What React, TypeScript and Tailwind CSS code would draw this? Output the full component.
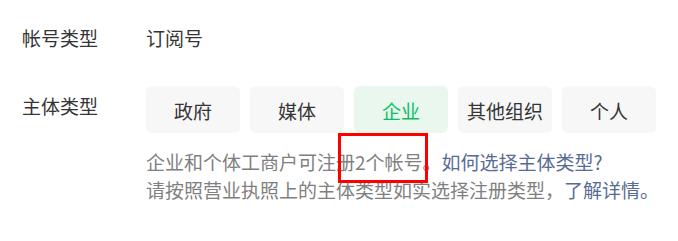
import React from 'react';

const types = ['政府', '媒体', '企业', '其他组织', '个人'];

const App: React.FC = () => {
  const active = '企业';

  return (
    <div
      className="w-[678px] h-[241px] bg-white pt-[24px] pl-[22px] text-[19px] text-[#353535]"
      style={{ fontFamily: '"Noto Sans CJK SC", "Noto Sans", sans-serif' }}
    >
      <div className="flex leading-[28px]">
        <div className="w-[124px] shrink-0">帐号类型</div>
        <div>订阅号</div>
      </div>

      <div className="flex mt-[34px]">
        <div className="w-[124px] shrink-0 pt-[6px] leading-[28px]">主体类型</div>
        <div>
          <div className="flex gap-[10px]">
            {types.map((t) => (
              <div
                key={t}
                className={`w-[94px] h-[47px] rounded-md flex items-center justify-center pt-[3px] ${
                  t === active ? 'bg-[#e9f7ee] text-[#07c160]' : 'bg-[#f7f7f7] text-[#353535]'
                }`}
              >
                {t}
              </div>
            ))}
          </div>

          <div className="relative mt-[15px] leading-[28px] text-[#7f7f7f]">
            <p>
              企业和个体工商户可注册2个帐号。
              <span className="text-[#576b95]">如何选择主体类型?</span>
            </p>
            <p>
              请按照营业执照上的主体类型如实选择注册类型，
              <span className="text-[#576b95]">了解详情。</span>
            </p>
            {/* highlight box */}
            <div className="absolute left-[192px] top-[-15px] w-[90px] h-[50px] border-[3px] border-[#ff0000]" />
          </div>
        </div>
      </div>
    </div>
  );
};

export default App;
